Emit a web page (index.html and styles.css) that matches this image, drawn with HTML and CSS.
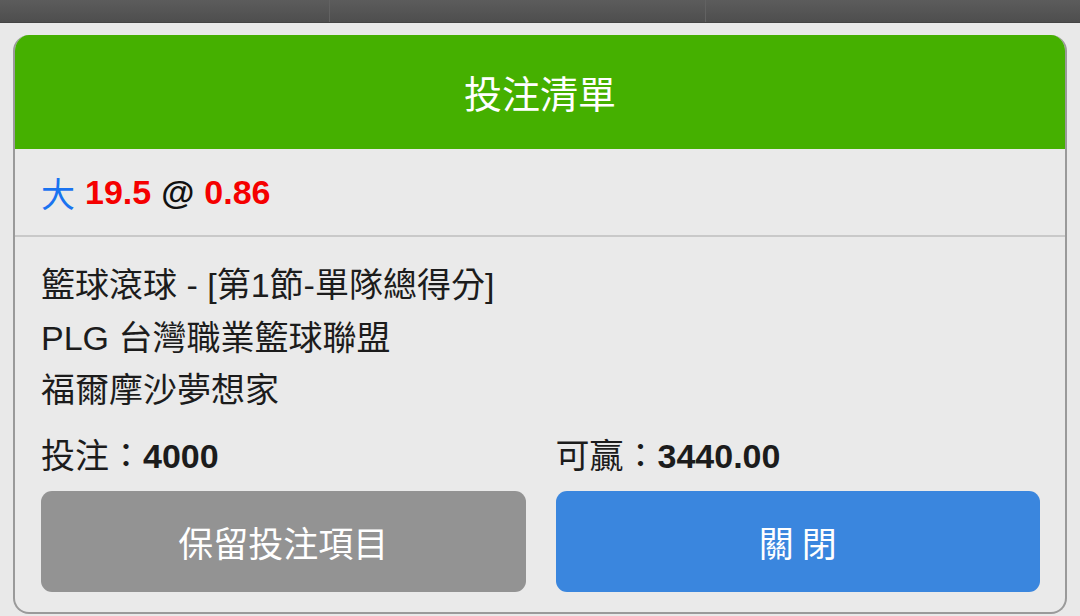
FILE: index.html
```html
<!DOCTYPE html>
<html lang="zh-Hant">
<head>
    <meta charset="UTF-8">
    <meta name="viewport" content="width=device-width, initial-scale=1.0">
    <title>投注清單</title>
    <link rel="stylesheet" href="styles.css">
</head>
<body>
    <div class="tabbar">
        <div class="tab tab-first"></div>
        <div class="tab"></div>
        <div class="tab"></div>
    </div>

    <div class="slip">
        <div class="slip-head">投注清單</div>

        <div class="slip-pick">
            <span class="side">大</span>
            <span class="num">19.5</span>
            <span class="at">@</span>
            <span class="num">0.86</span>
        </div>

        <div class="slip-body">
            <p class="line">籃球滾球 - [第1節-單隊總得分]</p>
            <p class="line">PLG 台灣職業籃球聯盟</p>
            <p class="line">福爾摩沙夢想家</p>

            <div class="amounts">
                <div class="amount">投注：<b>4000</b></div>
                <div class="amount">可贏：<b>3440.00</b></div>
            </div>

            <div class="actions">
                <button type="button" class="btn btn-keep">保留投注項目</button>
                <button type="button" class="btn btn-close">關 閉</button>
            </div>
        </div>
    </div>
</body>
</html>
```

FILE: styles.css
```css
/* Global */
body {
    margin: 0;
    background: #e9e9e9;
    font-family: "Liberation Sans", "Noto Sans CJK TC", sans-serif;
    color: #1c1c1c;
}

/* Top tab bar (partially hidden) */
.tabbar {
    display: flex;
    height: 22px;
    background: linear-gradient(to bottom, #5c5c5c, #4e4e4e);
    border-bottom: 1px solid #444;
}

.tab {
    flex: 1;
}

.tab-first {
    flex: 0 0 329px;
}

.tab + .tab {
    border-left: 1px solid #626262;
}

/* Bet slip card */
.slip {
    margin: 12px 13px 0;
    border: 2px solid #9a9a9a;
    border-top: none;
    border-radius: 16px;
    background: #eaeaea;
    overflow: hidden;
    height: 579px;
    box-sizing: border-box;
}

.slip-head {
    height: 114px;
    background: #45b000;
    color: #fff;
    font-family: "Noto Sans CJK TC", sans-serif;
    font-size: 38px;
    line-height: 114px;
    text-align: center;
    margin: 0 -2px;
}

.slip-pick {
    height: 86px;
    padding: 0 26px;
    display: flex;
    align-items: center;
    gap: 10px;
    font-size: 34px;
    font-weight: bold;
    border-bottom: 2px solid #c9c9c9;
}

.slip-pick .side {
    color: #1a73f0;
    font-weight: normal;
}

.slip-pick .num {
    color: #f50000;
}

.slip-pick .at {
    color: #111;
}

.slip-body {
    padding: 22px 25px 0 26px;
}

.line {
    margin: 0;
    font-size: 34px;
    line-height: 52.5px;
}

.amounts {
    display: flex;
    gap: 30px;
    margin-top: 14px;
}

.amount {
    flex: 1;
    font-size: 34px;
    line-height: 50px;
}

.amount b {
    font-weight: bold;
}

.actions {
    display: flex;
    gap: 30px;
    margin-top: 10px;
}

.btn {
    flex: 1;
    height: 101px;
    border: none;
    border-radius: 11px;
    color: #fff;
    font-family: "Noto Sans CJK TC", sans-serif;
    font-size: 35px;
    cursor: pointer;
}

.btn-keep {
    background: #939393;
}

.btn-close {
    background: #3a86de;
}
```
